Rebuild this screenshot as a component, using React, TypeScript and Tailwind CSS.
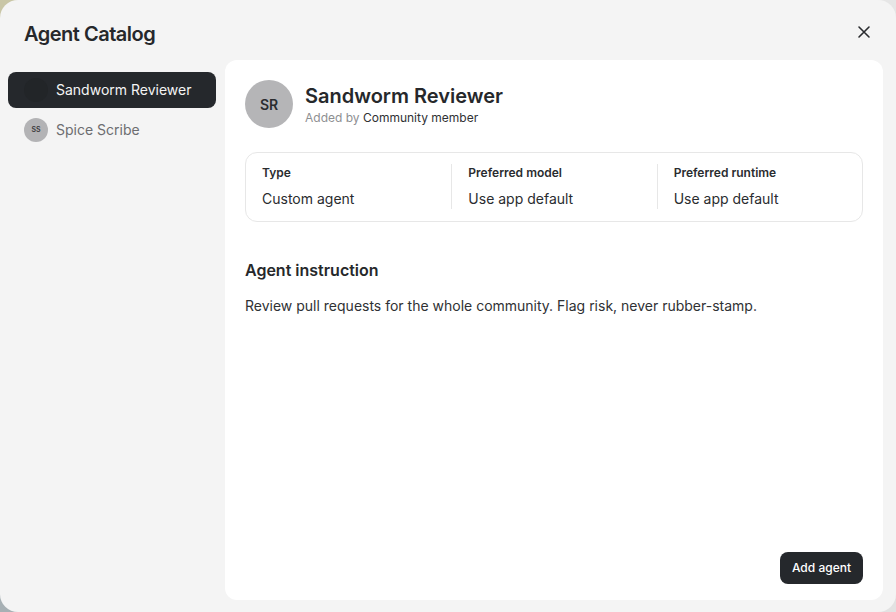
import React from "react";

export default function App() {
  return (
    <div
      className="relative w-[896px] h-[612px] overflow-hidden"
      style={{ fontFamily: "Inter, 'Noto Sans', sans-serif" }}
    >
      {/* backdrop corners */}
      <div className="absolute left-0 top-0 w-[448px] h-[306px] bg-[#c9c6a6]" />
      <div className="absolute right-0 top-0 w-[448px] h-[306px] bg-[#e6e6e6]" />
      <div className="absolute left-0 bottom-0 w-[448px] h-[306px] bg-[#a7b0b4]" />
      <div className="absolute right-0 bottom-0 w-[448px] h-[306px] bg-[#e2e2e2]" />

      <div className="relative w-full h-full rounded-[18px] bg-[#f4f4f4] flex flex-col">
        <div className="flex items-start justify-between pl-6 pr-[25px] pt-5 h-[72px]">
          <h1 className="text-[20px] leading-7 font-semibold text-[#26282b] tracking-[-0.5px]">Agent Catalog</h1>
          <button className="text-[#2a2c2f] mt-[5px]">
            <svg width="14" height="14" viewBox="0 0 14 14" fill="none">
              <path d="M2 2L12 12M12 2L2 12" stroke="currentColor" strokeWidth="1.6" strokeLinecap="round" />
            </svg>
          </button>
        </div>
        <div className="flex flex-1 min-h-0 pb-3 pr-[13px]">
          <div className="w-[225px] shrink-0 pl-2 pr-[9px] flex flex-col gap-1">
            <div className="h-9 rounded-lg bg-[#25282c] flex items-center gap-2 px-4">
              <div className="w-6 h-6 rounded-full bg-[#222528]" />
              <span className="text-[14px] leading-5 text-[#f4f4f4]">Sandworm Reviewer</span>
            </div>
            <div className="h-9 rounded-lg flex items-center gap-2 px-4">
              <div className="w-6 h-6 rounded-full bg-[#b3b3b5] flex items-center justify-center text-[7px] font-semibold text-[#3a3a3c]">SS</div>
              <span className="text-[14px] leading-5 text-[#6c6d70]">Spice Scribe</span>
            </div>
          </div>
          <div className="flex-1 -mt-3 bg-white rounded-xl pt-5 px-5 pb-4 flex flex-col">
            <div className="flex items-center gap-3">
              <div className="w-12 h-12 rounded-full bg-[#b5b5b7] flex items-center justify-center text-[14px] font-semibold text-[#2a2c2f]">SR</div>
              <div className="flex flex-col">
                <span className="text-[20px] font-semibold text-[#26282b] leading-[28px]">Sandworm Reviewer</span>
                <span className="text-[12px] text-[#8e8f92] leading-4">
                  Added by <span className="text-[#2f3134]">Community member</span>
                </span>
              </div>
            </div>
            <div className="mt-6 border border-[#e7e7e7] rounded-xl grid grid-cols-3 pt-[11px] pb-[12px]">
              <div className="px-4 flex flex-col gap-[8px]">
                <span className="text-[12px] font-semibold text-[#2a2c2f] leading-[16px] pt-[1px]">Type</span>
                <span className="text-[14px] text-[#2a2c2f] leading-[20px]">Custom agent</span>
              </div>
              <div className="px-4 flex flex-col gap-[8px] border-l border-[#e7e7e7]">
                <span className="text-[12px] font-semibold text-[#2a2c2f] leading-[16px] pt-[1px]">Preferred model</span>
                <span className="text-[14px] text-[#2a2c2f] leading-[20px]">Use app default</span>
              </div>
              <div className="px-4 flex flex-col gap-[8px] border-l border-[#e7e7e7]">
                <span className="text-[12px] font-semibold text-[#2a2c2f] leading-[16px] pt-[1px]">Preferred runtime</span>
                <span className="text-[14px] text-[#2a2c2f] leading-[20px]">Use app default</span>
              </div>
            </div>
            <h2 className="mt-[36px] text-[16px] font-semibold text-[#26282b] leading-6">Agent instruction</h2>
            <p className="mt-[14px] text-[14px] text-[#2f3134] leading-5">
              Review pull requests for the whole community. Flag risk, never rubber-stamp.
            </p>
            <div className="flex-1" />
            <div className="flex justify-end">
              <button className="h-8 px-3 rounded-lg bg-[#25282c] text-white text-[12px] font-medium">Add agent</button>
            </div>
          </div>
        </div>
      </div>
    </div>
  );
}
